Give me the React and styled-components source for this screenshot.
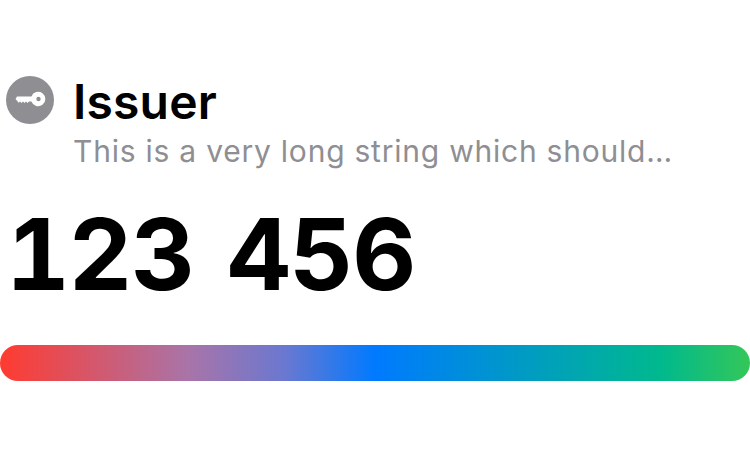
import styled, { createGlobalStyle } from "styled-components";

const GlobalStyle = createGlobalStyle`
  html, body {
    margin: 0;
    padding: 0;
    background: #ffffff;
    font-family: "Inter", "Liberation Sans", sans-serif;
  }
`;

const Card = styled.div`
  width: 750px;
  height: 450px;
  box-sizing: border-box;
  padding-top: 76px;
  display: flex;
  flex-direction: column;
  overflow: hidden;
`;

const Header = styled.div`
  display: flex;
  align-items: flex-start;
  gap: 19px;
  padding-left: 6px;
`;

const IconCircle = styled.svg`
  width: 48px;
  height: 48px;
  flex-shrink: 0;
`;

const Labels = styled.div`
  display: flex;
  flex-direction: column;
  min-width: 0;
`;

const Issuer = styled.div`
  font-size: 48px;
  line-height: 52px;
  font-weight: 600;
  letter-spacing: 0.2px;
  color: #000000;
`;

const Account = styled.div`
  margin-top: 3px;
  font-size: 30px;
  line-height: 40px;
  font-weight: 400;
  letter-spacing: 0.77px;
  color: #8e8e93;
  white-space: nowrap;
`;

const Code = styled.div`
  margin-top: 23px;
  padding-left: 6px;
  font-size: 99px;
  line-height: 120px;
  font-weight: 700;
  letter-spacing: -1.4px;
  word-spacing: 8px;
  font-feature-settings: "tnum";
  color: #000000;
`;

const Progress = styled.div`
  margin-top: 31px;
  height: 36px;
  border-radius: 18px;
  background: linear-gradient(
    90deg,
    #ff3b30 0%,
    #a974a8 25%,
    #6a78d0 38%,
    #007aff 50%,
    #00b98e 88%,
    #34c759 100%
  );
`;

const KeyIcon = () => (
  <IconCircle viewBox="0 0 48 48">
    <circle cx="24" cy="24" r="24" fill="#8e8e93" />
    <path
      fill="#ffffff"
      d="M11 20.5H25.4A7.2 7.2 0 1 1 25.4 25.5H23l-1.5 1.5-1.5-1.5-1.5 1.5-1.5-1.5-1.5 1.5-1.5-1.5-1.5 1.5H13L9.5 23z"
    />
    <circle cx="32.5" cy="23" r="2.2" fill="#8e8e93" />
  </IconCircle>
);

export default function App() {
  return (
    <>
      <GlobalStyle />
      <Card>
        <Header>
          <KeyIcon />
          <Labels>
            <Issuer>Issuer</Issuer>
            <Account>This is a very long string which should…</Account>
          </Labels>
        </Header>
        <Code>123 456</Code>
        <Progress />
      </Card>
    </>
  );
}
